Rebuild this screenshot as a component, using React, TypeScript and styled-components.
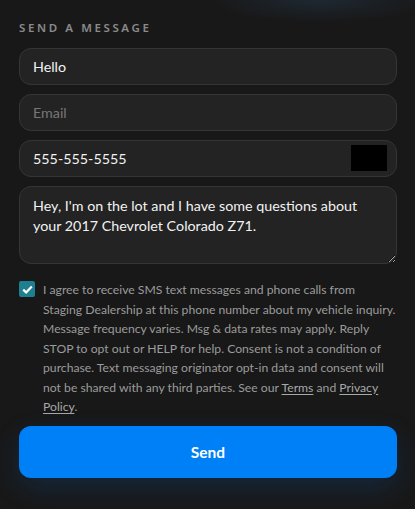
import React from "react";
import styled, { createGlobalStyle } from "styled-components";

const GlobalStyle = createGlobalStyle`
  html, body {
    margin: 0;
    padding: 0;
    background: #181818;
  }
  body {
    font-family: Lato, "Noto Sans", sans-serif;
    -webkit-font-smoothing: antialiased;
  }
`;

const Page = styled.div`
  min-height: 509px;
  box-sizing: border-box;
  padding: 20px 18px 30px 19px;
  background:
    radial-gradient(ellipse 110px 22px at 320px 0px, rgba(40, 70, 100, 0.35), transparent);
`;

const Heading = styled.h2`
  margin: 0 0 12px;
  font-family: "Noto Sans", sans-serif;
  font-size: 11.5px;
  font-weight: 600;
  letter-spacing: 2.6px;
  color: #8a8a8a;
  text-transform: uppercase;
  line-height: 16px;
`;

const Form = styled.form`
  display: flex;
  flex-direction: column;
  gap: 9px;
`;

const FieldWrap = styled.div`
  position: relative;
`;

const Input = styled.input`
  display: block;
  width: 100%;
  box-sizing: border-box;
  height: 37px;
  padding: 0 13px;
  border-radius: 12px;
  border: 1px solid #353535;
  background: #232323;
  color: #f2f2f2;
  font-family: inherit;
  font-size: 14.3px;
  outline: none;
  &::placeholder {
    color: #777;
  }
`;

const Masked = styled.span`
  position: absolute;
  top: 5px;
  right: 10px;
  width: 36px;
  height: 26px;
  background: #000;
`;

const TextArea = styled.textarea`
  display: block;
  width: 100%;
  box-sizing: border-box;
  height: 78px;
  padding: 9px 13px;
  border-radius: 12px;
  border: 1px solid #353535;
  background: #232323;
  color: #f2f2f2;
  font-family: inherit;
  font-size: 14.3px;
  line-height: 20px;
  outline: none;
`;

const Consent = styled.label`
  display: flex;
  gap: 8px;
  margin-top: 7px;
  align-items: flex-start;
`;

const Box = styled.span`
  flex: none;
  width: 16px;
  height: 16px;
  margin-top: 1px;
  border-radius: 2px;
  background: #1d7f90;
  display: flex;
  align-items: center;
  justify-content: center;
`;

const ConsentText = styled.p`
  margin: 0;
  font-size: 12.2px;
  line-height: 19.5px;
  color: #9b9b9b;
  a {
    color: #a8a8a8;
    text-decoration: underline;
    text-underline-offset: 2px;
  }
`;

const SendButton = styled.button`
  margin-top: 0;
  height: 52px;
  border: none;
  border-radius: 12px;
  background: #0080f6;
  color: #fff;
  font-family: inherit;
  font-size: 15.5px;
  font-weight: 700;
  box-shadow: 0 10px 28px rgba(0, 110, 220, 0.18);
  cursor: pointer;
`;

export default function App() {
  return (
    <Page>
      <GlobalStyle />
      <Heading>Send a Message</Heading>
      <Form onSubmit={(e) => e.preventDefault()}>
        <Input defaultValue="Hello" />
        <Input placeholder="Email" />
        <FieldWrap>
          <Input defaultValue="555-555-5555" />
          <Masked />
        </FieldWrap>
        <TextArea defaultValue="Hey, I'm on the lot and I have some questions about your 2017 Chevrolet Colorado Z71." />
        <Consent>
          <Box>
            <svg width="11" height="9" viewBox="0 0 11 9">
              <path d="M1.2 4.6 L4.1 7.4 L9.8 1.4" fill="none" stroke="#fff" strokeWidth="2.2" />
            </svg>
          </Box>
          <ConsentText>
            I agree to receive SMS text messages and phone calls from Staging Dealership at this
            phone number about my vehicle inquiry. Message frequency varies. Msg &amp; data rates
            may apply. Reply STOP to opt out or HELP for help. Consent is not a condition of
            purchase. Text messaging originator opt-in data and consent will not be shared with any
            third parties. See our <a href="#">Terms</a> and <a href="#">Privacy Policy</a>.
          </ConsentText>
        </Consent>
        <SendButton type="submit">Send</SendButton>
      </Form>
    </Page>
  );
}
